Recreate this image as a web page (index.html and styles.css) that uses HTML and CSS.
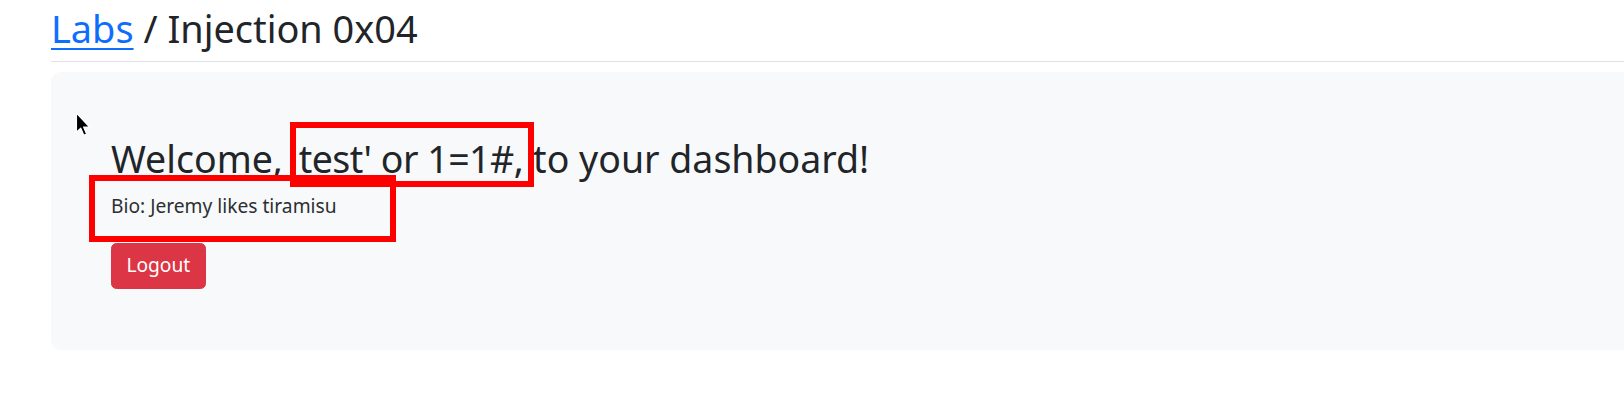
FILE: index.html
```html
<!DOCTYPE html>
<html lang="en">
<head>
<meta charset="utf-8">
<title>Injection 0x04</title>
<link rel="stylesheet" href="styles.css">
</head>
<body>
<div class="page">
  <header class="page-header">
    <h2 class="title"><a href="#" class="crumb">Labs</a> / Injection 0x04</h2>
  </header>
  <section class="panel">
    <h2 class="welcome">Welcome, <span class="username">test' or 1=1#,</span> to your dashboard!</h2>
    <p class="bio">Bio: Jeremy likes tiramisu</p>
    <button class="btn-logout" type="button">Logout</button>
  </section>
</div>
<div class="mark mark-user"></div>
<div class="mark mark-bio"></div>
<svg class="cursor" width="16" height="25" viewBox="0 0 13 21" aria-hidden="true">
  <path d="M1 1 L1 17 L4.6 13.6 L7.2 19.6 L9.6 18.6 L7 12.6 L12 12.6 Z" fill="#000" stroke="#fff" stroke-width="1" stroke-linejoin="round"/>
</svg>
</body>
</html>
```
FILE: styles.css
```css
html, body {
  margin: 0;
  padding: 0;
  background: #ffffff;
  overflow: hidden;
}
body {
  font-family: "Noto Sans", "DejaVu Sans", sans-serif;
  color: #212529;
  width: 1624px;
  height: 403px;
  position: relative;
}
.page {
  margin-left: 51px;
  margin-right: -40px;
}
.page-header {
  padding-top: 5px;
  padding-bottom: 10px;
  border-bottom: 1px solid #dee2e6;
  margin-bottom: 10px;
}
.title {
  margin: 0;
  font-size: 37.9px;
  line-height: 46px;
  font-weight: 400;
}
.crumb {
  color: #0d6efd;
  text-decoration: underline;
  text-underline-offset: 5px;
  text-decoration-thickness: 2px;
}
.panel {
  background: #f8f9fa;
  border-radius: 9.6px;
  padding: 64px 60px 61px 60px;
}
.welcome {
  margin: 0 0 10px 0;
  font-size: 37.5px;
  line-height: 46px;
  font-weight: 400;
}
.username {
  padding-left: 6px;
  letter-spacing: -0.5px;
}
.bio {
  margin: 0 0 22px 0;
  font-size: 19.2px;
  line-height: 28.8px;
  color: #2b2f33;
}
.btn-logout {
  display: block;
  font-family: inherit;
  font-size: 19.2px;
  line-height: 28.8px;
  color: #ffffff;
  background: #dc3545;
  border: 1.2px solid #dc3545;
  border-radius: 5.5px;
  padding: 7.2px 14.4px;
  height: 46px;
}
.mark {
  position: absolute;
  border: 6px solid #ff0000;
  box-sizing: border-box;
}
.mark-user {
  left: 290px;
  top: 122px;
  width: 244px;
  height: 65px;
}
.mark-bio {
  left: 89px;
  top: 175px;
  width: 307px;
  height: 67px;
}
.cursor {
  position: absolute;
  left: 75px;
  top: 112px;
}
```
